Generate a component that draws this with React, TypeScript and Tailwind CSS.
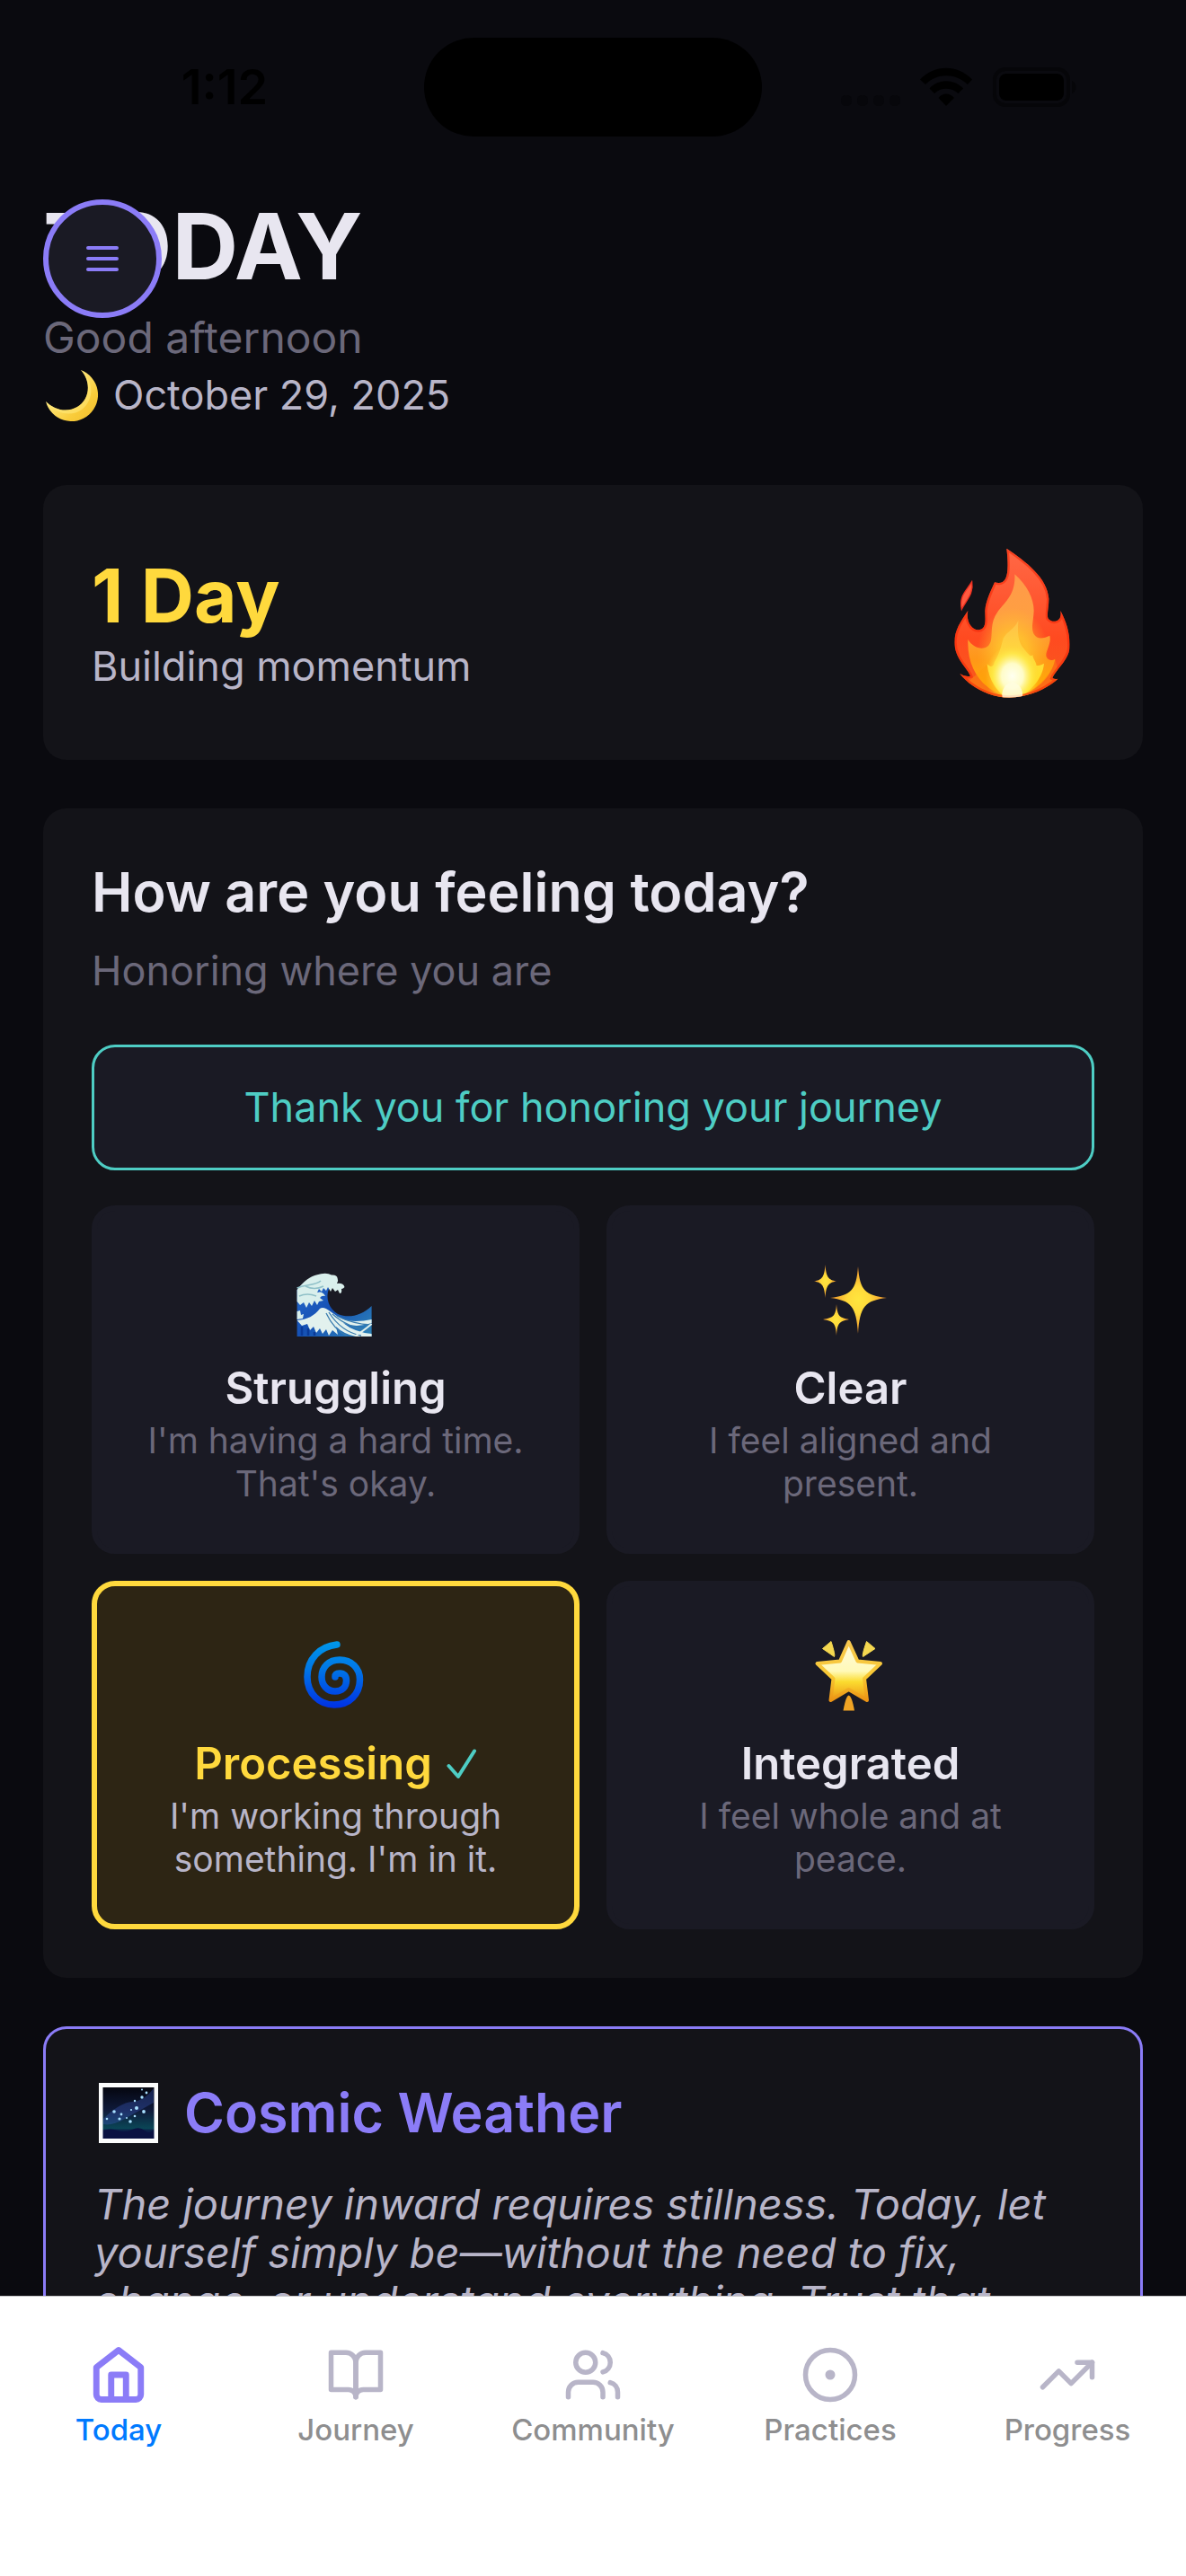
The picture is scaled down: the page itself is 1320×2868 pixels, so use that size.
import { useState } from "react";
import type { ReactNode } from "react";

function StatusBar() {
  return (
    <div className="grid grid-cols-[1fr_376px_1fr] items-center pt-[42px] text-black">
      <div className="flex justify-center pl-7 text-[54px] leading-[60px] font-semibold">1:12</div>
      <div className="h-[110px] rounded-full bg-black" />
      <div className="flex items-center justify-center pr-[34px]">
        <svg viewBox="0 0 262 44" className="h-11 w-[262px]" aria-hidden="true">
          <g fill="#07070b">
            <rect x="0" y="31" width="12" height="12" rx="5" />
            <rect x="18" y="31" width="12" height="12" rx="5" />
            <rect x="36" y="31" width="12" height="12" rx="5" />
            <rect x="54" y="31" width="12" height="12" rx="5" />
          </g>
          <path d="M88 13.500C104 -3.500 130 -3.500 146 13.500L141 19C127 6 107 6 94 19Z" />
          <path d="M98.500 23.500C108 12.500 126 12.500 136 23.500L130.500 29C123 22 111 22 104 29Z" />
          <path d="M108.500 34C113 28 121 28 126 34L117 43Z" />
          <rect x="171" y="2" width="82" height="40" rx="12" fill="none" stroke="#060609" strokeWidth="4" />
          <rect x="176" y="7" width="72" height="30" rx="8" />
          <path d="M257 15C263 17 263 27 257 29Z" fill="#060609" />
        </svg>
      </div>
    </div>
  );
}

function Moon() {
  return (
    <svg viewBox="48 410 66 60" className="h-[60px] w-[66px]" role="img" aria-label="Crescent moon">
      <defs>
        <linearGradient id="moon" x1="0" y1="0" x2="1" y2="1">
          <stop offset="0.3" stopColor="#ffeb82" />
          <stop offset="0.7" stopColor="#f9cc3a" />
          <stop offset="1" stopColor="#f0bd2c" />
        </linearGradient>
      </defs>
      <path d="M90 412A29.500 29.500 0 1 1 51 447C60 456 74 460 86 453C100 445 102 425 90 412Z" fill="url(#moon)" />
      <path d="M51 447C60 456 74 460 86 453C100 445 102 425 90 412C104 424 106 444 91 456C79 465 60 460 51 447Z" fill="#ffe878" opacity="0.6" />
    </svg>
  );
}

function Fire() {
  return (
    <svg viewBox="114 102 540 594" className="h-[198px] w-[180px] shrink-0" role="img" aria-label="Fire">
      <defs>
        <linearGradient id="fireOuter" x1="0" y1="0" x2="0" y2="1">
          <stop offset="0" stopColor="#ff6a48" />
          <stop offset="0.6" stopColor="#ff4a20" />
          <stop offset="1" stopColor="#f5601c" />
        </linearGradient>
        <linearGradient id="fireMid" x1="0" y1="0" x2="0" y2="1">
          <stop offset="0" stopColor="#ff9a4a" />
          <stop offset="0.4" stopColor="#ffa040" />
          <stop offset="0.7" stopColor="#ff9718" />
          <stop offset="1" stopColor="#ffb300" />
        </linearGradient>
        <linearGradient id="fireInner" x1="0" y1="0" x2="0" y2="1">
          <stop offset="0" stopColor="#ffc04a" />
          <stop offset="0.5" stopColor="#ffdc3a" />
          <stop offset="1" stopColor="#ffe11a" />
        </linearGradient>
        <radialGradient id="fireGlow">
          <stop offset="0" stopColor="#fffff0" />
          <stop offset="0.4" stopColor="#fffcc8" />
          <stop offset="0.72" stopColor="#ffec50" stopOpacity="0.7" />
          <stop offset="1" stopColor="#ffd23a" stopOpacity="0" />
        </radialGradient>
        <radialGradient id="fireHalo">
          <stop offset="0.4" stopColor="#ffd52e" stopOpacity="0.6" />
          <stop offset="1" stopColor="#ffc02a" stopOpacity="0" />
        </radialGradient>
        <clipPath id="fireClip">
          <path d="M361 152C425 195 498 250 502 320C502 350 494 375 500 386C512 402 548 400 541 360C562 400 574 440 571 485C568 525 524 558 514 585Q523 590 532 587C500 618 440 648 370 650C300 650 235 610 205 570Q222 582 240 578C230 550 187 520 187 465C187 425 208 395 232 360C224 395 245 426 268 424C296 422 289 385 289 360C292 325 308 295 321 265C358 275 372 250 361 152Z" />
        </clipPath>
      </defs>
      <g clipPath="url(#fireClip)">
        <rect x="180" y="140" width="400" height="520" fill="url(#fireOuter)" />
        <path d="M388 238C430 275 452 320 452 360C450 400 442 418 452 438C464 458 486 452 505 443C512 470 488 498 494 514C500 528 515 526 523 521C518 560 480 620 405 644L350 644C285 620 228 560 232 456C250 488 300 500 309 458C314 430 306 400 330 365C350 335 392 310 388 238Z" fill="url(#fireMid)" />
        <ellipse cx="382" cy="500" rx="120" ry="150" fill="url(#fireHalo)" />
        <path d="M400 392C398 430 396 460 420 488C436 510 445 515 448 506C448 522 460 530 460 542C470 545 478 540 486 536C482 580 450 620 412 644L350 644C318 620 300 580 296 538C308 550 318 548 320 532C340 500 344 470 350 452C360 430 390 420 400 392Z" fill="url(#fireInner)" />
        <ellipse cx="380" cy="578" rx="90" ry="105" fill="url(#fireGlow)" />
        <path d="M296 540C300 580 320 622 358 650H300L230 600Z" fill="#ff9a0a" opacity="0.4" />
        <path d="M523 521C518 560 470 620 405 646H470L540 590Z" fill="#ff8410" opacity="0.45" />
        <path d="M361 152C425 195 498 250 502 320C502 350 494 375 500 386C512 402 548 400 541 360C562 400 574 440 571 485C568 525 524 558 514 585Q523 590 532 587C500 618 440 648 370 650C300 650 235 610 205 570Q222 582 240 578C230 550 187 520 187 465C187 425 208 395 232 360C224 395 245 426 268 424C296 422 289 385 289 360C292 325 308 295 321 265C358 275 372 250 361 152Z" fill="none" stroke="#f52a08" strokeWidth="14" opacity="0.6" />
        <ellipse cx="380" cy="640" rx="34" ry="40" fill="#fffce0" opacity="0.8" />
      </g>
      <path d="M245 263C252 305 225 325 211 355C203 310 222 300 245 263Z" fill="#ff5a40" stroke="#f03020" strokeWidth="4" />
    </svg>
  );
}

function Wave() {
  return (
    <svg viewBox="0 0 96 96" className="size-24" role="img" aria-label="Wave">
      <defs>
        <linearGradient id="sea" x1="0" y1="0" x2="1" y2="1">
          <stop offset="0" stopColor="#2a6fd0" />
          <stop offset="0.5" stopColor="#1550b4" />
          <stop offset="1" stopColor="#2f86b8" />
        </linearGradient>
      </defs>
      <path d="M4.600 37C12 28 20 23 28 21L48 24L40 36C36 46 40 58 50 64C62 69 76 66 87.600 55V89H4.600Z" fill="url(#sea)" />
      <path d="M4.600 37C12 27 20 22 26 20.500Q37 17 43 20.500Q49 20 49.600 24Q51 27 49 30Q56 29 57.500 34Q56 36 54 36Q55 41 52 41L50 37L47 39L44 35L42 39L39 34L37 38L34 35L32 39L29 36L27 40Q33 38 36 44Q32 43 30 46L34 49L29 50L27 54L24 49L21 55L18 51L15 57L12 51L8 54L4.600 50Z" fill="#d9efec" />
      <path d="M4.600 35C14 31 26 32 31 27M14 33Q24 38 34 33M7 44Q16 40 26 44" fill="none" stroke="#8fc0c8" strokeWidth="1.500" />
      <path d="M4.600 61L8 60L9 65L12 64L11 69L4.600 70Z" fill="#d9efec" />
      <path d="M4.600 71C16 70 24 66 30 58C35 54 42 62 52 68C64 74 76 72 87.600 70L87.600 74Q70 80 56 74Q68 84 87.600 86V89H70Q56 86 48 78L50 87L44 82L40 88L37 81L33 86L30 80L26 85L23 78L19 82L16 75L10 77Z" fill="#e2f1ee" />
      <path d="M40 62Q54 84 76 88M37 63Q46 82 60 88M44 64Q62 80 86 82M49 66Q66 75 87 76" fill="none" stroke="#3a7cae" strokeWidth="1.300" />
      <path d="M70 88Q78 83 87.600 75" fill="none" stroke="#e2f1ee" strokeWidth="2" />
      <path d="M10 78V88M17 80V88M24 84V88" fill="none" stroke="#0a3a98" strokeWidth="2.500" />
    </svg>
  );
}

function Sparkles() {
  return (
    <svg viewBox="0 0 96 96" className="size-24" role="img" aria-label="Sparkles">
      <defs>
        <radialGradient id="spark">
          <stop offset="0" stopColor="#ffe63e" />
          <stop offset="0.4" stopColor="#ffd93a" />
          <stop offset="1" stopColor="#f0902a" />
        </radialGradient>
      </defs>
      <g fill="url(#spark)">
        <path d="M56 11C58 38 64 43 88 46C64 49 58 55 56 86C54 55 48 49 25 46C48 43 54 38 56 11Z" />
        <path d="M19.500 9C20.500 23 23 26 32 27.500C23 29 20.500 32 19.500 46C18.500 32 16 29 7 27.500C16 26 18.500 23 19.500 9Z" />
        <path d="M32 53C33 66 35 68 46 70C35 72 33 74 32 88C31 74 29 72 17 70C29 68 31 66 32 53Z" />
      </g>
    </svg>
  );
}

function Spiral() {
  return (
    <svg viewBox="0 0 96 96" className="size-24" role="img" aria-label="Cyclone">
      <defs>
        <linearGradient id="spiral" gradientUnits="userSpaceOnUse" x1="0" y1="10" x2="0" y2="85">
          <stop offset="0" stopColor="#0098ea" />
          <stop offset="0.4" stopColor="#0078e6" />
          <stop offset="1" stopColor="#0030e4" />
        </linearGradient>
      </defs>
      <path
        d="M49 14C30 16 16 30 16 50C16 68 29 81 46 81C63 81 74.500 69 74.500 53C74.500 40 65 31 52 31C40 31 32 39 32 50C32 59 38 66 47 66C55 66 59.500 61 59.500 54C59.500 49 57 46 52 46Q47 46 47 50"
        fill="none"
        stroke="url(#spiral)"
        strokeWidth="7.500"
        strokeLinecap="round"
      />
    </svg>
  );
}

function GlowingStar() {
  return (
    <svg viewBox="0 0 96 96" className="size-24" role="img" aria-label="Glowing star">
      <defs>
        <linearGradient id="star" x1="0" y1="0" x2="0" y2="1">
          <stop offset="0" stopColor="#fffbe0" />
          <stop offset="0.5" stopColor="#fff9b8" />
          <stop offset="0.68" stopColor="#fbdc30" />
          <stop offset="1" stopColor="#ec9414" />
        </linearGradient>
        <linearGradient id="starEdge" x1="0" y1="0" x2="0" y2="1">
          <stop offset="0" stopColor="#f8c850" />
          <stop offset="0.6" stopColor="#f8c832" />
          <stop offset="1" stopColor="#ec9414" />
        </linearGradient>
      </defs>
      <path
        d="M45.600 11L55.500 32.500L81 35L63 52L66 76L45.600 64L25.500 76L28.500 52L10.500 35L36 32.500Z"
        fill="url(#star)"
        stroke="url(#starEdge)"
        strokeWidth="4"
        strokeLinejoin="round"
      />
      <path d="M26 10.500L16.500 18.500L29.500 27.500Q31 26 26 10.500ZM65.500 10.500L75 18.500L61.500 27.500Q60 26 65.500 10.500Z" fill="#f5d850" stroke="#f5d850" strokeLinejoin="round" />
      <path d="M45.600 70.500Q49 71 52 87.500H39.500Q42.500 71 45.600 70.500Z" fill="#f0a424" />
    </svg>
  );
}

function NightSky() {
  return (
    <svg viewBox="0 0 76 78" className="h-[78px] w-[76px] shrink-0" role="img" aria-label="Milky way">
      <defs>
        <linearGradient id="sky" x1="0" y1="0" x2="0" y2="1">
          <stop offset="0" stopColor="#05060f" />
          <stop offset="0.45" stopColor="#0f1a3a" />
          <stop offset="0.8" stopColor="#0a4656" />
          <stop offset="0.84" stopColor="#0a1f48" />
          <stop offset="1" stopColor="#0d1550" />
        </linearGradient>
      </defs>
      <rect x="5" y="6" width="66" height="67" fill="#fbfcfc" />
      <rect x="9.500" y="11" width="57" height="57" fill="url(#sky)" />
      <path d="M10 46Q28 28 42 27T66 12V28Q48 38 34 46T10 52Z" fill="#3d5cc0" opacity="0.35" />
      <path d="M10 59Q18 56 26 59T42 58T56 59T66 58V68H10Z" fill="#0a1242" />
      <g fill="#a8e0ff">
        <circle cx="22" cy="38" r="1.800" />
        <circle cx="30" cy="41" r="1.400" />
        <circle cx="28" cy="46" r="1.600" />
        <circle cx="14" cy="46" r="1.300" />
        <circle cx="40" cy="49" r="1.800" />
        <circle cx="47" cy="34" r="2" />
        <circle cx="55" cy="38" r="1.900" />
        <circle cx="53" cy="22" r="1.700" />
        <circle cx="58" cy="17" r="1.400" />
        <circle cx="53" cy="13.500" r="1" />
        <circle cx="45" cy="26" r="1.200" />
        <circle cx="45" cy="43" r="1.300" />
        <circle cx="41" cy="36" r="1.100" />
        <circle cx="36" cy="45" r="1" />
      </g>
    </svg>
  );
}

type Mood = { id: string; emoji: ReactNode; title: string; text: string };

const moods: Mood[] = [
  { id: "struggling", emoji: <Wave />, title: "Struggling", text: "I'm having a hard time. That's okay." },
  { id: "clear", emoji: <Sparkles />, title: "Clear", text: "I feel aligned and present." },
  { id: "processing", emoji: <Spiral />, title: "Processing", text: "I'm working through something. I'm in it." },
  { id: "integrated", emoji: <GlowingStar />, title: "Integrated", text: "I feel whole and at peace." },
];

function MoodCard({ mood, selected, onSelect }: { mood: Mood; selected: boolean; onSelect: () => void }) {
  return (
    <button
      type="button"
      aria-pressed={selected}
      onClick={onSelect}
      className={`flex flex-col items-center rounded-[26px] border-[6px] px-[42px] pt-[51px] pb-12 text-center ${
        selected ? "border-[#ffd93d] bg-[#2d2514]" : "border-[#1a1a24] bg-[#1a1a24]"
      }`}
    >
      {mood.emoji}
      <span
        className={`mt-[21px] flex items-center gap-4 text-[49px] leading-[60px] font-semibold ${
          selected ? "text-[#ffd93d]" : "text-[#e8e6f0]"
        }`}
      >
        {mood.title}
        {selected && (
          <svg viewBox="0 0 34 34" className="size-[34px]" role="img" aria-label="Selected">
            <path d="M2.500 19L13 31L31 2.500" fill="none" stroke="#4ecdc4" strokeWidth="4" strokeLinecap="round" strokeLinejoin="round" />
          </svg>
        )}
      </span>
      <span className={`mt-1 text-[39px] leading-[48px] ${selected ? "text-[#b8b5c8]" : "text-[#6b687a]"}`}>{mood.text}</span>
    </button>
  );
}

const tabs: { label: string; icon: ReactNode }[] = [
  {
    label: "Today",
    icon: (
      <>
        <path d="m3 9 9-7 9 7v11a2 2 0 0 1-2 2H5a2 2 0 0 1-2-2z" />
        <polyline points="9 22 9 12 15 12 15 22" />
      </>
    ),
  },
  {
    label: "Journey",
    icon: (
      <>
        <path d="M2 3h6a4 4 0 0 1 4 4v14a3 3 0 0 0-3-3H2z" />
        <path d="M22 3h-6a4 4 0 0 0-4 4v14a3 3 0 0 1 3-3h7z" />
      </>
    ),
  },
  {
    label: "Community",
    icon: (
      <>
        <path d="M16 21v-2a4 4 0 0 0-4-4H6a4 4 0 0 0-4 4v2" />
        <circle cx="9" cy="7" r="4" />
        <path d="M22 21v-2a4 4 0 0 0-3-3.870" />
        <path d="M16 3.130a4 4 0 0 1 0 7.750" />
      </>
    ),
  },
  {
    label: "Practices",
    icon: (
      <>
        <circle cx="12" cy="12" r="10" />
        <circle cx="12" cy="12" r="1" />
      </>
    ),
  },
  {
    label: "Progress",
    icon: (
      <>
        <polyline points="22 7 13.500 15.500 8.500 10.500 2 17" />
        <polyline points="16 7 22 7 22 13" />
      </>
    ),
  },
];

function TabBar() {
  return (
    <nav className="grid shrink-0 grid-cols-5 border-t border-[#c8c8ca] bg-white pt-[54px] pb-[143px]">
      {tabs.map((tab, i) => (
        <a
          key={tab.label}
          href={`#${tab.label.toLowerCase()}`}
          aria-current={i === 0 ? "page" : undefined}
          className={`flex flex-col items-center gap-2 text-[33px] leading-10 font-medium ${i === 0 ? "text-[#007aff]" : "text-[#8e8e8f]"}`}
        >
          <svg
            viewBox="0 0 24 24"
            className={`size-[66px] ${i === 0 ? "text-[#8b7cf7]" : "text-[#b8b5c8]"}`}
            fill="none"
            stroke="currentColor"
            strokeWidth={i === 0 ? 2.5 : 2}
            strokeLinecap="round"
            strokeLinejoin="round"
            aria-hidden="true"
          >
            {tab.icon}
          </svg>
          {tab.label}
        </a>
      ))}
    </nav>
  );
}

export default function App() {
  const [mood, setMood] = useState("processing");
  return (
    <div className="flex h-screen flex-col overflow-hidden bg-[#0a0a0f] font-['Inter',sans-serif]">
      <StatusBar />
      <main className="min-h-0 flex-1 overflow-y-auto px-12 [scrollbar-width:none]">
        <header className="relative pt-[58px] pb-[70px]">
          <h1 className="text-[102px] leading-[128px] font-bold text-[#e8e6f0]">TODAY</h1>
          <p className="mt-2 text-[48px] leading-[60px] text-[#6b687a]">Good afternoon</p>
          <p className="mt-1 flex items-center gap-3 text-[45px] leading-[60px] text-[#b8b5c8]">
            <Moon />
            October 29, 2025
          </p>
          <button
            type="button"
            aria-label="Open menu"
            className="absolute top-[70px] left-0 flex size-[132px] items-center justify-center rounded-full border-[6px] border-[#8b7cf7] bg-[#1a1a24]"
          >
            <svg viewBox="0 0 24 24" className="size-12" stroke="#8b7cf7" strokeWidth="2" strokeLinecap="round" aria-hidden="true">
              <path d="M4 6h16M4 12h16M4 18h16" />
            </svg>
          </button>
        </header>

        <div className="flex flex-col gap-[54px]">
          <section className="flex items-center justify-between rounded-[26px] bg-[#131318] p-[54px]">
            <div>
              <h2 className="text-[82px] leading-[98px] font-bold text-[#ffd93d]">1 Day</h2>
              <p className="text-[45px] leading-[58px] text-[#b8b5c8]">Building momentum</p>
            </div>
            <Fire />
          </section>

          <section className="rounded-[26px] bg-[#131318] p-[54px]">
            <h2 className="text-[61px] leading-[78px] font-semibold text-[#e8e6f0]">How are you feeling today?</h2>
            <p className="mt-5 text-[45px] leading-[58px] text-[#6b687a]">Honoring where you are</p>
            <p className="mt-[53px] rounded-[26px] border-[3px] border-[#4ecdc4] bg-[#1a1a24] py-[38px] text-center text-[45px] leading-[58px] text-[#4ecdc4]">
              Thank you for honoring your journey
            </p>
            <div className="mt-[39px] grid grid-cols-2 gap-[30px]">
              {moods.map((m) => (
                <MoodCard key={m.id} mood={m} selected={m.id === mood} onSelect={() => setMood(m.id)} />
              ))}
            </div>
          </section>

          <section className="rounded-[26px] border-[3px] border-[#8b7cf7] bg-[#131318] p-[54px]">
            <h2 className="flex items-center gap-6 text-[61px] leading-[78px] font-semibold text-[#8b7cf7]">
              <NightSky />
              Cosmic Weather
            </h2>
            <p className="mt-9 text-[47px] leading-[54px] text-[#b8b5c8] italic">
              The journey inward requires stillness. Today, let yourself simply be—without the need to fix, change, or understand
              everything. Trust that
            </p>
          </section>
        </div>
      </main>
      <TabBar />
    </div>
  );
}
